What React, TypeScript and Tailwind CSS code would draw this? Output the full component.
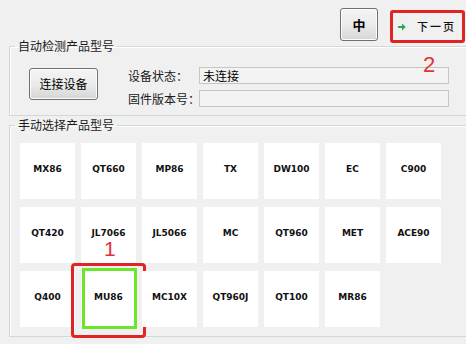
import React from 'react';

const rows = [
  ['MX86', 'QT660', 'MP86', 'TX', 'DW100', 'EC', 'C900'],
  ['QT420', 'JL7066', 'JL5066', 'MC', 'QT960', 'MET', 'ACE90'],
  ['Q400', 'MU86', 'MC10X', 'QT960J', 'QT100', 'MR86'],
];

const cjk = { fontFamily: '"Noto Sans CJK SC", "Noto Sans", sans-serif' };
const latin = { fontFamily: '"DejaVu Sans", "Noto Sans", sans-serif' };

function WinButton({ children, className }: { children: React.ReactNode; className: string }) {
  return (
    <button
      className={`flex items-center justify-center rounded-[3px] border border-[#707070] bg-gradient-to-b from-[#f4f4f4] via-[#ebebeb] to-[#d6d6d6] text-black shadow-[inset_0_0_0_1px_#fcfcfc] ${className}`}
    >
      {children}
    </button>
  );
}

function Field({ label, value }: { label: string; value?: string }) {
  return (
    <div className="flex items-center">
      <span className="w-[71px] whitespace-nowrap text-[12px] leading-none text-[#1a1a1a]">{label}</span>
      <div className="flex h-[17px] w-[250px] items-center border border-[#c6c6c6] bg-[#f3f3f3] pl-[3px] text-[12px] leading-none text-black">
        {value}
      </div>
    </div>
  );
}

export default function App() {
  return (
    <div className="relative h-[344px] w-[466px] overflow-hidden bg-[#f0f0f0]" style={cjk}>
      {/* top buttons */}
      <div className="flex h-[39px] items-start justify-end gap-[12px] pr-[1px] pt-[8px]">
        <WinButton className="h-[33px] w-[38px] text-[13px] font-bold">中</WinButton>
        <div className="relative mt-[2px] flex h-[33px] w-[75px] items-center pl-[8px]">
          <svg width="8" height="8" viewBox="0 0 8 8" className="mt-[1px]">
            <path d="M0 3h4V0.5L7.8 4 4 7.5V5H0z" fill="#2aa84a" />
          </svg>
          <span className="ml-[11px] text-[11px] font-medium tracking-[2px] text-[#111]">下一页</span>
          <div className="absolute inset-0 rounded-[3px] border-[3px] border-[#e02424]" />
          <span className="absolute left-[33px] top-[44px] text-[22px] leading-none text-[#e03434]" style={{ fontFamily: '"Liberation Sans", sans-serif' }}>
            2
          </span>
        </div>
      </div>

      {/* auto detect */}
      <fieldset className="-mr-[30px] ml-[9px] border border-[#d2d7da] px-[19px] pb-[8px] pt-[14px] shadow-[inset_1px_1px_0_#ffffff]">
        <legend className="-ml-[14px] px-[3px] text-[12px] leading-[14px] text-[#1a1a1a]">自动检测产品型号</legend>
        <div className="flex items-start gap-[30px]">
          <WinButton className="mt-[1px] h-[32px] w-[69px] text-[12px]">连接设备</WinButton>
          <div className="flex flex-col gap-[6px]">
            <Field label="设备状态：" value="未连接" />
            <Field label="固件版本号：" />
          </div>
        </div>
      </fieldset>

      {/* manual select */}
      <fieldset className="-mr-[30px] ml-[9px] mt-[2px] border border-[#d2d7da] pb-[9px] pl-[10px] pt-[11px] shadow-[inset_1px_1px_0_#ffffff]">
        <legend className="-ml-[5px] px-[3px] text-[12px] leading-[14px] text-[#1a1a1a]">手动选择产品型号</legend>
        <div className="grid w-[421px] grid-cols-[repeat(7,55px)] gap-x-[6px] gap-y-[8px]" style={latin}>
          {rows.flat().map(name => (
            <div
              key={name}
              className="relative flex h-[56px] items-center justify-center bg-white pb-[2px] text-[9px] font-bold text-[#111]"
            >
              {name}
              {name === 'MU86' && (
                <>
                  <div className="absolute left-[1px] top-[-3px] h-[61px] w-[55px] border-[3px] border-[#6ce62a]" />
                  <div className="absolute left-[-10px] top-[-8px] h-[75px] w-[75px] rounded-[4px] border-[3px] border-[#e02424]" />
                  <span
                    className="absolute left-[23px] top-[-33px] text-[21px] leading-none text-[#e03434]"
                    style={{ fontFamily: '"Liberation Sans", sans-serif', fontWeight: 400 }}
                  >
                    1
                  </span>
                </>
              )}
            </div>
          ))}
        </div>
      </fieldset>
    </div>
  );
}
